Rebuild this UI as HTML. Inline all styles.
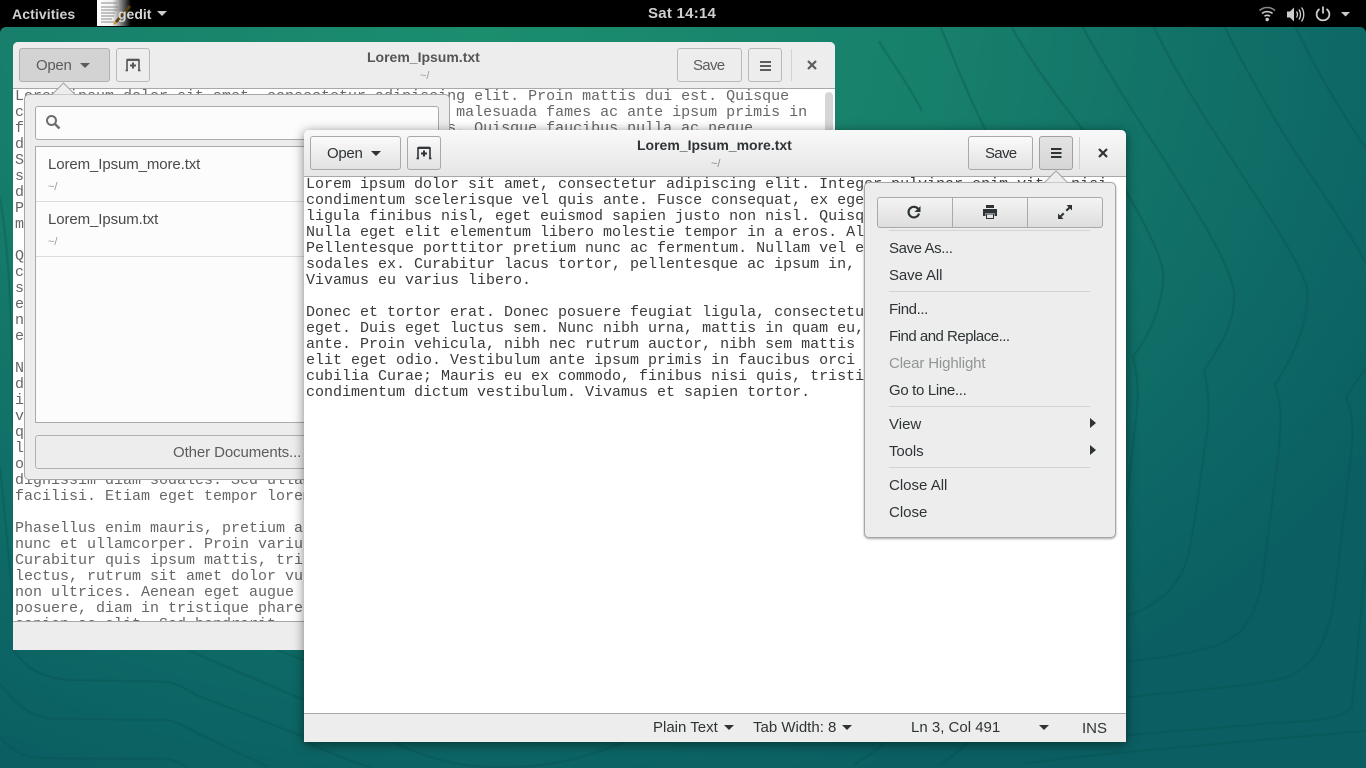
<!DOCTYPE html>
<html><head><meta charset="utf-8"><style>
html,body{margin:0;padding:0;width:1366px;height:768px;overflow:hidden;background:#000}
*{box-sizing:border-box}
body{position:relative;font-family:"Liberation Sans",sans-serif;font-size:15px;color:#2e3436}
.abs,.t,.btn,.win,.pop{position:absolute}
.t{white-space:pre;line-height:20px;height:20px}
#desk{left:0;top:27px;width:1366px;height:741px;position:absolute;border-radius:6px 6px 0 0;overflow:hidden;background:radial-gradient(ellipse 1050px 800px at 480px 0px,#1b8e6e 0%,#177f6b 45%,#0e6a66 80%,#0b5f62 100%)}
#desk path{vector-effect:non-scaling-stroke}
.win{background:#fff;border-radius:5px 5px 0 0;overflow:hidden}
.hdr{position:absolute;left:0;top:0;right:0;height:47px;border-bottom:1px solid #a8a8a8}
.btn{height:34px;border:1px solid #a9a9a9;border-radius:3px;background:linear-gradient(#fafafa,#e2e2e2)}
.mono{position:absolute;font-family:"Liberation Mono",monospace;font-size:15px;line-height:16px;white-space:pre}
.status{position:absolute;left:0;right:0;bottom:0;height:29px;background:#ededed;border-top:1px solid #a8a8a8}
.pop{background:#ededed;border:1px solid #a6a6a6;border-radius:5px}
.sep{position:absolute;height:1px;background:#d3d3d3}
.tri{position:absolute;width:0;height:0;border-left:5px solid transparent;border-right:5px solid transparent;border-top:5px solid #2e3436}
</style></head><body>

<div id="desk">
<svg width="1366" height="741" style="position:absolute;left:0;top:0;filter:blur(.6px)" fill="none" stroke="#07504c" stroke-opacity=".5" stroke-width="1.400">
<g transform="translate(780,-7) scale(.3737,.477)">
<path d="M430 15C470 90 510 170 550 230"/>
<path d="M620 15C680 100 770 190 840 260C920 340 1010 470 1025 525C1030 590 990 660 945 705C960 760 960 800 950 850C940 930 930 1000 925 1040"/>
<path d="M810 15C870 100 950 200 1010 270C1090 370 1200 500 1215 570C1220 640 1170 690 1135 735C1150 790 1150 830 1140 880C1125 960 1110 1060 1090 1130C1060 1200 1000 1230 925 1250"/>
<path d="M1000 15C1060 110 1140 210 1200 280C1280 380 1400 510 1412 570C1412 650 1360 720 1325 765C1345 810 1340 850 1335 900C1320 990 1305 1090 1290 1180C1270 1260 1230 1300 1150 1315C1080 1330 1000 1340 925 1345"/>
<path d="M1190 15C1250 110 1330 220 1390 290C1450 360 1520 440 1568 510"/>
<path d="M1380 15C1430 100 1500 190 1568 270"/>
<path d="M1568 730C1550 750 1530 770 1515 790C1535 830 1535 870 1525 930C1510 1030 1495 1140 1480 1230C1455 1320 1420 1370 1320 1385C1200 1400 1050 1410 925 1420"/>
<path d="M1568 1130C1555 1230 1545 1340 1530 1440C1500 1470 1400 1470 1300 1475C1180 1485 1050 1490 925 1500"/>
<path d="M200 1560C240 1540 270 1525 290 1510M430 1560C470 1540 490 1525 510 1510M650 1560C800 1540 1300 1510 1568 1490"/>
<path d="M265 45C300 90 340 130 380 190"/>
</g>
<g transform="translate(0,613) scale(.4464,.3333)">
<path d="M30 30C50 70 80 110 150 120L370 125C400 130 420 150 440 165L680 290"/>
<path d="M0 130C30 190 70 235 130 237L370 240C400 245 420 265 450 285L600 380"/>
<path d="M0 290C30 340 60 355 110 355L370 357C395 360 410 375 420 382"/>
<path d="M420 30L680 180"/>
<path d="M620 30L680 60"/>
<path d="M680 300C720 330 780 360 830 382"/>
<path d="M880 306C950 350 1020 382 1120 382C1240 382 1320 350 1400 306"/>
</g>
<path d="M0 170C10 230 12 300 13 400" />
<path d="M0 440C6 500 10 540 13 580" />
</svg>
</div>

<!-- top bar -->
<div class="abs" style="left:0;top:0;width:1366px;height:27px;background:#000"></div>
<div class="t" style="left:12px;top:4px;color:#cfcfcf;font-weight:bold;font-size:14px;letter-spacing:.1px">Activities</div>
<svg class="abs" style="left:96px;top:0" width="40" height="27">
<defs><linearGradient id="fade" x1="0" x2="1"><stop offset="0" stop-color="#fff"/><stop offset=".45" stop-color="#f2f2f2"/><stop offset="1" stop-color="#000"/></linearGradient></defs>
<rect x="1" y="0" width="34" height="26" fill="url(#fade)"/>
<g stroke="#8a8a8a" stroke-width="1"><path d="M5 3h16M5 7h17M5 10h17M5 13h14M5 16h13M5 19h11M5 22h13"/></g>
<path d="M19 21L33 5l2 2L21 23z" fill="#5a3f10"/><path d="M19 21l2 2-4 2z" fill="#c98a20"/>
</svg>
<div class="t" style="left:118px;top:4px;color:#d6d6d6;font-weight:bold;font-size:14px">gedit</div>
<div class="tri" style="left:157px;top:11px;border-top-color:#ccc"></div>
<div class="t" style="left:648px;top:4px;color:#cfcfcf;font-weight:bold;font-size:15px;letter-spacing:.25px">Sat 14:14</div>
<svg class="abs" style="left:1258px;top:5px" width="96" height="18" fill="none" stroke="#ccc">
<path d="M1.500 5.500C6 1.500 12.500 1.500 17 5.500" stroke-width="1.600" stroke="#888"/>
<path d="M4 8.500C7 6 11.500 6 14.500 8.500" stroke-width="1.600"/>
<path d="M6.500 11.200C8 10 10.500 10 12 11.200" stroke-width="1.600"/>
<circle cx="9.200" cy="14.500" r="1.700" fill="#ccc" stroke="none"/>
<path d="M29 6.500h3l4-4v14l-4-4h-3z" fill="#ccc" stroke="none"/>
<path d="M38.500 6.500c1.200 1.800 1.200 4.200 0 6M41 4.500c2 3 2 7 0 10M43.500 2.500c3 4 3 10 0 14" stroke-width="1.300"/>
<path d="M65 1.500v7" stroke-width="1.800"/>
<path d="M61.500 4C58.500 6 58 9.500 59.200 12C62 16.500 68 16.500 70.800 12C72 9.500 71.500 6 68.500 4" stroke-width="1.800"/>
<path d="M83 7h9l-4.500 4.500z" fill="#ccc" stroke="none"/>
</svg>

<!-- BACK WINDOW -->
<div class="win back" style="left:13px;top:42px;width:822px;height:608px">
<div class="mono" style="left:2px;top:47px;color:#666;width:820px;height:533px;overflow:hidden">Lorem ipsum dolor sit amet, consectetur adipiscing elit. Proin mattis dui est. Quisque
c                                                malesuada fames ac ante ipsum primis in
f                                               s. Quisque faucibus nulla ac neque
d
S
s
d
P
m

Q
c
s
e
n
e

N
d
i
v
q
l
o
dignissim diam sodales. Sed ullamcorper
facilisi. Etiam eget tempor lorem
 
Phasellus enim mauris, pretium a
nunc et ullamcorper. Proin varius
Curabitur quis ipsum mattis, tristique
lectus, rutrum sit amet dolor vulputate
non ultrices. Aenean eget augue
posuere, diam in tristique pharetra
sapien ac elit. Sed hendrerit</div>
<div class="abs" style="left:812px;top:50px;width:8px;height:200px;background:#d6d6d6;border-radius:5px"></div>
<div class="hdr" style="background:#ededed"></div>
<div class="status" style="height:29px"></div>
</div>
<div class="btn" style="left:19px;top:48px;width:91px;background:#d3d3d3;border-color:#b0b0b0"></div>
<div class="t" style="left:36px;top:56px;color:#5c5c5c;letter-spacing:-.3px">Open</div>
<div class="tri" style="left:80px;top:63px;border-top-color:#5c5c5c"></div>
<div class="btn" style="left:116px;top:48px;width:34px;background:#ededed;border-color:#b9b9b9"></div>
<svg class="abs" style="left:125px;top:57px" width="18" height="16" fill="none" stroke="#555" stroke-width="1.600"><path d="M2 13V3H14V13M.5 13.500h2.500M13 13.500h2.500"/><path d="M2 2.800H14" stroke-width="2.200"/><path d="M8 5.500v6M5 8.500h6" stroke-width="2"/></svg>
<div class="t" style="left:367px;top:47px;color:#555;font-weight:bold;font-size:14px">Lorem_Ipsum.txt</div>
<div class="t" style="left:420px;top:66px;color:#999;font-size:11px">~/</div>
<div class="btn" style="left:677px;top:48px;width:65px;background:#ededed;border-color:#b9b9b9"></div>
<div class="t" style="left:693px;top:56px;color:#5c5c5c;letter-spacing:-.7px">Save</div>
<div class="btn" style="left:748px;top:48px;width:34px;background:#ededed;border-color:#b9b9b9"></div>
<svg class="abs" style="left:760px;top:60px" width="12" height="12" fill="#5c5c5c"><rect y="1" width="11" height="2"/><rect y="5" width="11" height="2"/><rect y="9" width="11" height="2"/></svg>
<div class="abs" style="left:791px;top:49px;width:1px;height:32px;background:#d2d2d2"></div>
<svg class="abs" style="left:807px;top:60px" width="10" height="10" stroke="#5c5c5c" stroke-width="2.200"><path d="M1 1l8 8M9 1l-8 8"/></svg>

<!-- BACK POPOVER -->
<div class="pop" style="left:24px;top:94px;width:426px;height:386px"></div>
<svg class="abs" style="left:50px;top:81px" width="28" height="15"><path d="M2 13.500L13.500 2L25 13.500z" fill="#ededed"/><path d="M2 13.500L13.500 2L25 13.500" fill="none" stroke="#a6a6a6"/></svg>
<div class="abs" style="left:35px;top:106px;width:404px;height:34px;background:#fcfcfc;border:1px solid #aaa;border-radius:3px"></div>
<svg class="abs" style="left:44px;top:113px" width="18" height="18" fill="none" stroke="#6e6e6e" stroke-width="2"><circle cx="7.500" cy="7.500" r="4.500"/><path d="M11 11l4.500 4.500" stroke-width="2.400"/></svg>
<div class="abs" style="left:35px;top:146px;width:404px;height:277px;background:#fcfcfc;border:1px solid #aaa"></div>
<div class="abs" style="left:36px;top:201px;width:402px;height:1px;background:#dcdcdc"></div>
<div class="abs" style="left:36px;top:256px;width:402px;height:1px;background:#dcdcdc"></div>
<div class="t" style="left:48px;top:155px;color:#4a4a4a;letter-spacing:-.1px">Lorem_Ipsum_more.txt</div>
<div class="t" style="left:48px;top:177px;color:#999;font-size:11px">~/</div>
<div class="t" style="left:48px;top:210px;color:#4a4a4a;letter-spacing:-.1px">Lorem_Ipsum.txt</div>
<div class="t" style="left:48px;top:232px;color:#999;font-size:11px">~/</div>
<div class="abs" style="left:35px;top:435px;width:404px;height:34px;background:#ededed;border:1px solid #b0b0b0;border-radius:3px"></div>
<div class="t" style="left:173px;top:443px;color:#5c5c5c;letter-spacing:-.1px">Other Documents...</div>

<!-- FRONT WINDOW -->
<div class="abs" style="left:304px;top:130px;width:822px;height:612px;border-radius:5px 5px 0 0;box-shadow:0 2px 11px rgba(0,0,0,.5)"></div>
<div class="win" style="left:304px;top:130px;width:822px;height:612px">
<div class="mono" style="left:2px;top:47px;color:#3a3a3a;width:815px">Lorem ipsum dolor sit amet, consectetur adipiscing elit. Integer pulvinar enim vitae nisi
condimentum scelerisque vel quis ante. Fusce consequat, ex eget
ligula finibus nisl, eget euismod sapien justo non nisl. Quisque
Nulla eget elit elementum libero molestie tempor in a eros. Aliquam
Pellentesque porttitor pretium nunc ac fermentum. Nullam vel erat
sodales ex. Curabitur lacus tortor, pellentesque ac ipsum in,
Vivamus eu varius libero.

Donec et tortor erat. Donec posuere feugiat ligula, consectetur
eget. Duis eget luctus sem. Nunc nibh urna, mattis in quam eu,
ante. Proin vehicula, nibh nec rutrum auctor, nibh sem mattis
elit eget odio. Vestibulum ante ipsum primis in faucibus orci
cubilia Curae; Mauris eu ex commodo, finibus nisi quis, tristique
condimentum dictum vestibulum. Vivamus et sapien tortor.</div>
<div class="hdr" style="background:linear-gradient(#f9f9f9,#e6e6e6)"></div>
<div class="status"></div>
</div>
<div class="btn" style="left:310px;top:136px;width:91px"></div>
<div class="t" style="left:327px;top:144px;letter-spacing:-.3px">Open</div>
<div class="tri" style="left:371px;top:151px"></div>
<div class="btn" style="left:407px;top:136px;width:34px"></div>
<svg class="abs" style="left:416px;top:145px" width="18" height="16" fill="none" stroke="#2e3436" stroke-width="1.600"><path d="M2 13V3H14V13M.5 13.500h2.500M13 13.500h2.500"/><path d="M2 2.800H14" stroke-width="2.200"/><path d="M8 5.500v6M5 8.500h6" stroke-width="2"/></svg>
<div class="t" style="left:637px;top:135px;font-weight:bold;font-size:14px">Lorem_Ipsum_more.txt</div>
<div class="t" style="left:711px;top:154px;color:#888;font-size:11px">~/</div>
<div class="btn" style="left:968px;top:136px;width:65px"></div>
<div class="t" style="left:985px;top:144px;letter-spacing:-.7px">Save</div>
<div class="btn" style="left:1039px;top:136px;width:34px;background:linear-gradient(#e4e4e4,#d6d6d6);border-color:#a0a0a0"></div>
<svg class="abs" style="left:1051px;top:147px" width="12" height="12" fill="#2e3436"><rect y="1" width="10.500" height="2"/><rect y="5" width="10.500" height="2"/><rect y="9" width="10.500" height="2"/></svg>
<div class="abs" style="left:1079px;top:137px;width:1px;height:32px;background:#cfcfcf"></div>
<svg class="abs" style="left:1098px;top:148px" width="10" height="10" stroke="#2e3436" stroke-width="2.200"><path d="M1 1l8 8M9 1l-8 8"/></svg>

<div class="t" style="left:653px;top:718px">Plain Text</div>
<div class="tri" style="left:724px;top:725px"></div>
<div class="t" style="left:753px;top:718px">Tab Width: 8</div>
<div class="tri" style="left:842px;top:725px"></div>
<div class="t" style="left:911px;top:718px">Ln 3, Col 491</div>
<div class="tri" style="left:1039px;top:725px"></div>
<div class="t" style="left:1082px;top:719px">INS</div>

<!-- FRONT POPOVER -->
<div class="pop" style="left:864px;top:182px;width:252px;height:356px;box-shadow:0 1px 2px rgba(0,0,0,.35)"></div>
<svg class="abs" style="left:1042px;top:169px" width="28" height="15"><path d="M2.500 13.500L14 2L25.500 13.500z" fill="#ededed"/><path d="M2.500 13.500L14 2L25.500 13.500" fill="none" stroke="#a6a6a6"/></svg>
<div class="abs" style="left:877px;top:197px;width:226px;height:31px;border:1px solid #a9a9a9;border-radius:3px;background:linear-gradient(#f4f4f4,#dedede)"></div>
<div class="abs" style="left:952px;top:197px;width:1px;height:31px;background:#a9a9a9"></div>
<div class="abs" style="left:1027px;top:197px;width:1px;height:31px;background:#a9a9a9"></div>
<svg class="abs" style="left:906px;top:204px" width="16" height="16" fill="none" stroke="#2e3436" stroke-width="2.200"><path d="M12.500 5.500A5.300 5.300 0 1 0 13 9.500"/><path d="M14.500 2v6h-6z" fill="#2e3436" stroke="none"/></svg>
<svg class="abs" style="left:982px;top:204px" width="16" height="16" fill="#2e3436"><rect x="4" y="1" width="8" height="3"/><path d="M1 5h14v7h-2.500V9h-9v3H1z"/><path d="M4.500 10h7v4.500h-7z" fill="none" stroke="#2e3436"/></svg>
<svg class="abs" style="left:1057px;top:204px" width="16" height="16" fill="#2e3436"><path d="M9.500 1H15V6.500L13 4.500L10 7.500L8.500 6L11.500 3z"/><path d="M1 9.500V15H6.500L4.500 13L7.500 10L6 8.500L3 11.500z"/></svg>
<div class="sep" style="left:889px;top:230px;width:201px"></div>
<div class="t" style="left:889px;top:239px;letter-spacing:-.4px">Save As...</div>
<div class="t" style="left:889px;top:266px;letter-spacing:-.1px">Save All</div>
<div class="sep" style="left:889px;top:291px;width:201px"></div>
<div class="t" style="left:889px;top:300px;letter-spacing:-.4px">Find...</div>
<div class="t" style="left:889px;top:327px;letter-spacing:-.5px">Find and Replace...</div>
<div class="t" style="left:889px;top:354px;color:#929595;letter-spacing:-.13px">Clear Highlight</div>
<div class="t" style="left:889px;top:381px;letter-spacing:-.33px">Go to Line...</div>
<div class="sep" style="left:889px;top:406px;width:201px"></div>
<div class="t" style="left:889px;top:415px">View</div>
<div class="abs" style="left:1090px;top:418px;width:0;height:0;border-top:5.500px solid transparent;border-bottom:5.500px solid transparent;border-left:6px solid #2e3436"></div>
<div class="t" style="left:889px;top:442px;letter-spacing:-.1px">Tools</div>
<div class="abs" style="left:1090px;top:445px;width:0;height:0;border-top:5.500px solid transparent;border-bottom:5.500px solid transparent;border-left:6px solid #2e3436"></div>
<div class="sep" style="left:889px;top:467px;width:201px"></div>
<div class="t" style="left:889px;top:476px">Close All</div>
<div class="t" style="left:889px;top:503px">Close</div>
</body></html>
